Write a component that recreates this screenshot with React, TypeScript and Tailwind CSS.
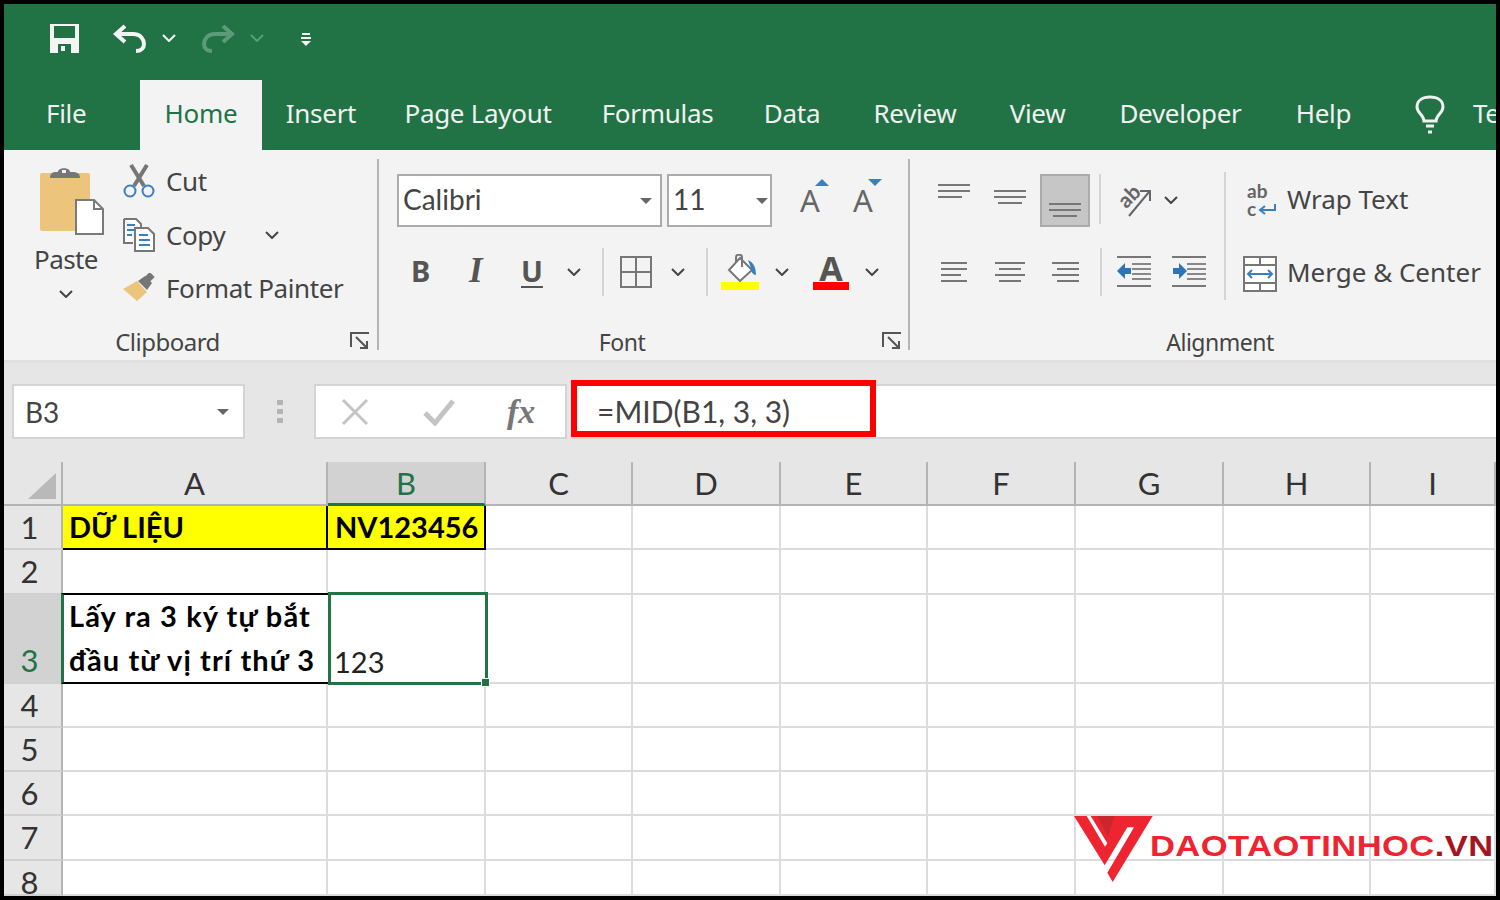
import React from 'react';

const segoe = "font-['Noto_Sans','Open_Sans',sans-serif]";
const calibri = "font-['Lato','Noto_Sans',sans-serif]";

const Chevron = ({ className = 'stroke-[#444]' }: { className?: string }) => (
  <svg viewBox="0 0 14 8" className={`w-[14px] h-[8px] fill-none stroke-2 ${className}`}>
    <polyline points="1,1 7,7 13,1" />
  </svg>
);

const Caret = () => (
  <svg viewBox="0 0 12 6" className="w-[12px] h-[6px] fill-[#666]">
    <polygon points="0,0 12,0 6,6" />
  </svg>
);

const Launcher = ({ className }: { className: string }) => (
  <svg viewBox="0 0 20 18" className={`absolute w-[20px] h-[18px] fill-none stroke-[#555] stroke-2 ${className}`}>
    <polyline points="19,1 1,1 1,15" />
    <path d="M6 5 L17 16 M17 9 V16 H10" />
  </svg>
);

const Lines = ({ widths, align = 'left', size = 32, gap = 6, color = '#777' }: { widths: number[]; align?: 'left' | 'center' | 'right'; size?: number; gap?: number; color?: string }) => (
  <svg width={size} height={(widths.length - 1) * gap + 2} className="block">
    {widths.map((w, i) => {
      const x = align === 'left' ? 0 : align === 'center' ? (size - w) / 2 : size - w;
      return <rect key={i} x={x} y={i * gap} width={w} height={2} fill={color} />;
    })}
  </svg>
);

const IndentIcon = ({ flip }: { flip?: boolean }) => (
  <svg viewBox="0 0 34 32" className="w-[34px] h-[32px]">
    <rect x="0" y="0" width="34" height="2" fill="#777" />
    <rect x="0" y="29" width="34" height="2" fill="#777" />
    {[7, 12, 17, 22].map((y) => (
      <rect key={y} x="15" y={y} width="19" height="2" fill="#888" />
    ))}
    {flip ? (
      <path d="M1 12 H7 V7 L15 15 L7 23 V18 H1 Z" fill="#2f75b5" />
    ) : (
      <path d="M14 12 H8 V7 L0 15 L8 23 V18 H14 Z" fill="#2f75b5" />
    )}
  </svg>
);

const QuickAccess = () => (
  <div className="h-[76px] flex items-center pb-[9px] bg-[#217346]">
    <svg viewBox="0 0 30 30" className="ml-[46px] w-[30px] h-[30px] fill-[#f4f4f4]">
      <path fillRule="evenodd" d="M0 1 H29 V30 H0 Z M4 3 V15 H25 V3 Z M8 21 V30 H21 V21 Z M11 23 H15 V28 H11 Z" />
    </svg>
    <svg viewBox="0 0 34 30" className="ml-[33px] w-[34px] h-[30px] fill-none stroke-[#f4f4f4] stroke-[4]">
      <path d="M12 3 L3 11 L12 19 M3 11 H20 C28 11 31 17 31 21 C31 25 28 28 23 28" />
    </svg>
    <span className="ml-[15px]"><Chevron className="stroke-[#f4f4f4]" /></span>
    <svg viewBox="0 0 34 30" className="ml-[25px] w-[34px] h-[30px] fill-none stroke-[#5c9a78] stroke-[4]">
      <path d="M22 3 L31 11 L22 19 M31 11 H14 C6 11 3 17 3 21 C3 25 6 28 11 28" />
    </svg>
    <span className="ml-[15px]"><Chevron className="stroke-[#5c9a78]" /></span>
    <svg viewBox="0 0 10 13" className="ml-[37px] mt-[3px] w-[10px] h-[13px] fill-[#f4f4f4]">
      <rect x="1" y="0" width="8" height="2" />
      <rect x="0" y="4" width="10" height="2" />
      <polygon points="0,8 10,8 5,13" />
    </svg>
  </div>
);

const tabs = [
  { label: 'Insert', width: 'w-[118px]' },
  { label: 'Page Layout', width: 'w-[196px]' },
  { label: 'Formulas', width: 'w-[163px]' },
  { label: 'Data', width: 'w-[106px]' },
  { label: 'Review', width: 'w-[140px]' },
  { label: 'View', width: 'w-[105px]' },
  { label: 'Developer', width: 'w-[181px]' },
  { label: 'Help', width: 'w-[105px]' },
];

const TabBar = () => (
  <div className={`h-[70px] flex items-stretch bg-[#217346] overflow-hidden text-[26px] tracking-[-0.3px] text-[#f1f1f1] ${segoe}`}>
    <div className="ml-[42px] w-[94px] shrink-0 pt-[11px] leading-[44px]">File</div>
    <div className="w-[122px] shrink-0 pt-[11px] leading-[44px] text-center bg-[#f3f3f3] text-[#217346]">Home</div>
    {tabs.map((t) => (
      <div key={t.label} className={`${t.width} shrink-0 text-center pt-[11px] leading-[44px] whitespace-nowrap`}>{t.label}</div>
    ))}
    <svg viewBox="0 0 30 40" className="ml-[39px] mt-[15px] w-[30px] h-[40px] fill-none stroke-[#f1f1f1] stroke-[3] shrink-0">
      <path d="M9 26 C9 20 2 18 2 12 C2 5 8 2 15 2 C22 2 28 5 28 12 C28 18 21 20 21 26 Z M11 31 H19 M13 37 H17" />
    </svg>
    <div className="ml-[28px] pt-[11px] leading-[44px] shrink-0">Te</div>
  </div>
);

const Divider = () => <div className="w-[2px] h-[191px] mt-[9px] bg-[#b4b4b4] shrink-0" />;
const MiniDivider = ({ className = '' }: { className?: string }) => <div className={`w-[2px] bg-[#d4d4d4] ${className}`} />;

const ClipboardGroup = () => (
  <div className="relative w-[373px] flex flex-col h-[210px]">
    <div className="flex-1 flex">
      <div className="ml-[20px] w-[84px] flex flex-col items-center pt-[15px]">
        <svg viewBox="0 0 64 70" className="ml-[12px] w-[64px] h-[70px]">
          <rect x="0" y="8" width="50" height="58" rx="2" fill="#edc47c" />
          <path d="M10 13 C10 7 14 7 18 7 C18 2 30 2 30 7 C35 7 40 7 40 13 Z" fill="#767676" />
          <rect x="22" y="5" width="4" height="3" fill="#f3f3f3" />
          <path d="M36 35 H54 L63 44 V69 H36 Z" fill="#fff" stroke="#7a7a7a" strokeWidth="2" />
          <path d="M54 35 V44 H63" fill="none" stroke="#7a7a7a" strokeWidth="2" />
        </svg>
        <div className={`mt-[6px] text-[26px] leading-[36px] tracking-[-0.6px] text-[#444] ${segoe}`}>Paste</div>
        <div className="mt-[13px]"><Chevron /></div>
      </div>
      <div className={`ml-[15px] pt-[4px] text-[26px] tracking-[-0.4px] text-[#444] ${segoe}`}>
        <div className="h-[54px] flex items-center">
          <svg viewBox="0 0 32 34" className="w-[32px] h-[34px] fill-none">
            <path d="M8 1 L21 22 M24 1 L11 22" stroke="#767676" strokeWidth="4" />
            <circle cx="7" cy="27" r="5.5" stroke="#3a7fc1" strokeWidth="2" />
            <circle cx="25" cy="27" r="5.5" stroke="#3a7fc1" strokeWidth="2" />
          </svg>
          <span className="ml-[11px]">Cut</span>
        </div>
        <div className="h-[54px] flex items-center">
          <svg viewBox="0 0 32 34" className="w-[32px] h-[34px] fill-none">
            <path d="M1 1 H13 L18 6 V10 M10 25 H1 V1" stroke="#777" strokeWidth="2" fill="#fff" />
            <path d="M4 7 H12 M4 12 H12 M4 17 H9" stroke="#3a7fc1" strokeWidth="2" />
            <path d="M12 10 H25 L31 16 V33 H12 Z" stroke="#777" strokeWidth="2" fill="#fff" />
            <path d="M16 17 H25 M16 22 H27 M16 27 H27" stroke="#3a7fc1" strokeWidth="2" />
          </svg>
          <span className="ml-[11px]">Copy</span>
          <span className="ml-[40px]"><Chevron /></span>
        </div>
        <div className="h-[52px] flex items-center whitespace-nowrap">
          <svg viewBox="0 0 32 30" className="w-[32px] h-[30px]">
            <polygon points="0,16 14,8 24,19 14,28" fill="#edc47c" />
            <polygon points="15,8 22,3 29,10 24,17" fill="#767676" />
            <rect x="23" y="0" width="7" height="7" fill="#767676" transform="rotate(45 26 4)" />
          </svg>
          <span className="ml-[11px]">Format Painter</span>
        </div>
      </div>
    </div>
    <div className={`h-[36px] pr-[46px] text-center text-[24px] leading-[36px] tracking-[-0.5px] text-[#444] ${segoe}`}>Clipboard</div>
    <Launcher className="right-[7px] bottom-[10px]" />
  </div>
);

const FontGroup = () => (
  <div className="relative w-[529px] flex flex-col h-[210px] text-[#555]">
    <div className="flex-1">
      <div className="flex items-center pt-[24px] pl-[18px]">
        <div className={`w-[265px] h-[53px] bg-white border-2 border-[#ababab] flex items-center justify-between pl-[4px] pr-[8px] text-[28px] text-[#444] ${calibri}`}>
          <span className="pb-[3px]">Calibri</span><Caret />
        </div>
        <div className={`ml-[5px] w-[105px] h-[53px] bg-white border-2 border-[#ababab] flex items-center justify-between pl-[4px] pr-[2px] text-[28px] text-[#444] ${calibri}`}>
          <span className="pb-[3px]">11</span><Caret />
        </div>
        <div className={`relative ml-[28px] w-[26px] text-[31px] leading-none text-[#666] ${segoe}`}>
          A
          <svg viewBox="0 0 14 7" className="absolute -top-[6px] -right-[3px] w-[14px] h-[7px] fill-[#3a7fc1]"><polygon points="0,7 14,7 7,0" /></svg>
        </div>
        <div className={`relative ml-[27px] w-[26px] text-[31px] leading-none text-[#666] ${segoe}`}>
          A
          <svg viewBox="0 0 14 7" className="absolute -top-[6px] -right-[3px] w-[14px] h-[7px] fill-[#3a7fc1]"><polygon points="0,0 14,0 7,7" /></svg>
        </div>
      </div>
      <div className="flex items-center mt-[23px] h-[44px] pl-[32px]">
        <span className={`w-[58px] text-[29px] font-bold leading-none pb-[3px] ${segoe}`}>B</span>
        <span className="w-[52px] text-[35px] font-bold italic leading-none pb-[3px] font-['Liberation_Serif',serif]">I</span>
        <span className={`w-[46px] text-[29px] font-bold leading-none pb-[3px] underline underline-offset-4 ${segoe}`}>U</span>
        <Chevron />
        <MiniDivider className="ml-[21px] h-[48px]" />
        <svg viewBox="0 0 32 32" className="ml-[16px] w-[32px] h-[32px] fill-none stroke-[#777] stroke-2">
          <path d="M1 1 H31 V31 H1 Z M16 1 V31 M1 16 H31" />
        </svg>
        <span className="ml-[19px]"><Chevron /></span>
        <MiniDivider className="ml-[21px] h-[48px]" />
        <div className="ml-[13px] w-[38px] flex flex-col items-center">
          <svg viewBox="0 0 32 28" className="w-[32px] h-[28px]">
            <path d="M16 4 L28 16 L16 27 L5 16 Z" fill="#fff" stroke="#777" strokeWidth="2" />
            <path d="M12 9 V3 C12 0 18 0 18 3 V13" fill="none" stroke="#777" strokeWidth="2" />
            <path d="M24 6 C29 8 32 13 32 21 C29 21 27 18 27 14 Z" fill="#3a7fc1" />
          </svg>
          <div className="w-[38px] h-[8px] bg-[#ffff00]" />
        </div>
        <span className="ml-[16px]"><Chevron /></span>
        <div className="ml-[24px] w-[36px] flex flex-col items-center">
          <span className={`text-[34px] font-bold leading-[28px] text-[#555] ${segoe}`}>A</span>
          <div className="w-[36px] h-[8px] bg-[#ff0000]" />
        </div>
        <span className="ml-[16px]"><Chevron /></span>
      </div>
    </div>
    <div className={`h-[36px] pr-[43px] text-center text-[23px] leading-[36px] tracking-[-0.5px] text-[#444] ${segoe}`}>Font</div>
    <Launcher className="right-[6px] bottom-[10px]" />
  </div>
);

const AlignmentGroup = () => (
  <div className="flex-1 flex flex-col h-[210px] overflow-hidden">
    <div className="flex-1 flex">
      <div className="w-[314px] shrink-0">
        <div className="flex h-[53px] mt-[24px] pl-[28px]">
          <div className="w-[56px] pt-[10px]"><Lines widths={[32, 32, 24]} /></div>
          <div className="w-[46px] pt-[16px]"><Lines widths={[32, 32, 24]} align="center" /></div>
          <div className="w-[50px] h-[53px] bg-[#c6c6c6] border-2 border-[#ababab] flex items-end justify-center pb-[8px]"><Lines widths={[32, 32, 24]} align="center" /></div>
          <MiniDivider className="ml-[9px] h-[50px]" />
          <svg viewBox="0 0 34 32" className="ml-[16px] mt-[10px] w-[34px] h-[32px] fill-none stroke-[#666] overflow-visible">
            <text x="13" y="19" fontSize="21" fontWeight="700" textAnchor="middle" transform="rotate(-45 13 13)" fill="#666" stroke="none" fontFamily="Lato, sans-serif">ab</text>
            <path d="M12 32 L32 8 M23 7 H33 V17" strokeWidth="2" />
          </svg>
          <span className="ml-[13px] mt-[22px]"><Chevron /></span>
        </div>
        <div className="flex items-center h-[44px] mt-[23px] pl-[31px]">
          <div className="w-[54px]"><Lines widths={[26, 26, 20, 26]} size={26} /></div>
          <div className="w-[57px]"><Lines widths={[30, 22, 30, 22]} size={30} align="center" /></div>
          <div className="w-[48px]"><Lines widths={[27, 22, 27, 22]} size={27} align="right" /></div>
          <MiniDivider className="h-[48px]" />
          <span className="ml-[15px]"><IndentIcon /></span>
          <span className="ml-[21px]"><IndentIcon flip /></span>
        </div>
      </div>
      <MiniDivider className="h-[128px] mt-[22px] shrink-0" />
      <div className={`pl-[17px] pt-[29px] text-[26px] text-[#444] whitespace-nowrap ${segoe}`}>
        <div className="flex items-center h-[44px] pl-[4px]">
          <svg viewBox="0 0 30 34" className="w-[30px] h-[34px] overflow-visible">
            <text x="0" y="14" fontSize="19" fontWeight="700" fill="#666" fontFamily="Lato, sans-serif">ab</text>
            <text x="0" y="32" fontSize="19" fontWeight="700" fill="#666" fontFamily="Lato, sans-serif">c</text>
            <path d="M28 20 V26 H14 M18 22 L13 26 L18 30" fill="none" stroke="#3a7fc1" strokeWidth="2" />
          </svg>
          <span className="ml-[10px] pb-[3px]">Wrap Text</span>
        </div>
        <div className="flex items-center h-[44px] mt-[29px]">
          <svg viewBox="0 0 34 36" className="w-[34px] h-[36px] fill-none">
            <rect x="1" y="1" width="32" height="34" fill="#fff" stroke="#777" strokeWidth="2" />
            <path d="M1 9 H33 M1 27 H33 M17 1 V9 M17 27 V35" stroke="#777" strokeWidth="2" />
            <path d="M5 18 H29 M9 14 L5 18 L9 22 M25 14 L29 18 L25 22" stroke="#3a7fc1" strokeWidth="2" />
          </svg>
          <span className="ml-[10px] pb-[3px]">Merge &amp; Center</span>
        </div>
      </div>
    </div>
    <div className={`h-[36px] pl-[34px] text-center text-[23px] leading-[36px] tracking-[-0.5px] text-[#444] ${segoe}`}>Alignment</div>
  </div>
);

const Ribbon = () => (
  <div className="h-[210px] flex bg-[#f3f3f3]">
    <ClipboardGroup />
    <Divider />
    <FontGroup />
    <Divider />
    <AlignmentGroup />
  </div>
);

const FormulaBar = () => (
  <div className="h-[102px] bg-[#e6e6e6] border-t-[3px] border-[#e1e1e1] flex items-start pt-[21px]">
    <div className={`ml-[8px] w-[233px] h-[55px] bg-white border-2 border-[#d4d4d4] flex items-center justify-between pl-[11px] pr-[14px] text-[28px] text-[#444] ${calibri}`}>
      <span>B3</span><Caret />
    </div>
    <div className="ml-[32px] mt-[16px] flex flex-col gap-[4px]">
      <div className="w-[6px] h-[5px] bg-[#b4b4b4]" />
      <div className="w-[6px] h-[5px] bg-[#b4b4b4]" />
      <div className="w-[6px] h-[5px] bg-[#b4b4b4]" />
    </div>
    <div className="ml-[31px] w-[253px] h-[55px] bg-white border-2 border-[#d4d4d4] flex items-center">
      <svg viewBox="0 0 28 28" className="ml-[25px] w-[28px] h-[28px] fill-none stroke-[#c4c4c4] stroke-[3]"><path d="M2 2 L26 26 M26 2 L2 26" /></svg>
      <svg viewBox="0 0 32 28" className="ml-[54px] w-[32px] h-[28px] fill-none stroke-[#c4c4c4] stroke-[5]"><path d="M2 15 L12 25 L30 3" /></svg>
      <span className="ml-[52px] text-[34px] leading-none italic font-bold text-[#777] font-['Liberation_Serif',serif]">fx</span>
    </div>
    <div className="relative ml-[4px] flex-1 h-[55px] bg-white border-y-2 border-[#d4d4d4] flex items-center pl-[26px] text-[30px] text-[#444]">
      <span className={calibri}>=MID(B1, 3, 3)</span>
      <div className="absolute left-0 -top-[6px] w-[305px] h-[57px] border-[6px] border-[#ff0000]" />
    </div>
  </div>
);

const columns = ['A', 'B', 'C', 'D', 'E', 'F', 'G', 'H', 'I'];
const rows = ['1', '2', '3', '4', '5', '6', '7', '8'];

const Cell = ({ row, col }: { row: string; col: string }) => {
  const key = col + row;
  if (key === 'A1') {
    return <div className="bg-[#ffff00] border-b-2 border-r-2 border-black pl-[6px] leading-[41px] font-bold text-[29px] text-black">DỮ LIỆU</div>;
  }
  if (key === 'B1') {
    return <div className="bg-[#ffff00] border-b-2 border-r-2 border-black pl-[7px] leading-[41px] font-bold text-[29px] text-black whitespace-nowrap">NV123456</div>;
  }
  if (key === 'A3') {
    return (
      <div className="-mt-[2px] -ml-[2px] border-y-2 border-black border-l-[3px] border-l-[#217346] pl-[5px] leading-[44px] font-bold text-[29px] tracking-[1.1px] text-black whitespace-nowrap">
        <div className="-mt-[1px]">Lấy ra 3 ký tự bắt</div>
        <div>đầu từ vị trí thứ 3</div>
      </div>
    );
  }
  if (key === 'B3') {
    return (
      <div className="relative -mt-[3px] -mr-[2px] -mb-[1px] border-[3px] border-[#217346] flex items-end pl-[3px] leading-[41px] text-[29px] text-[#222]">
        123
        <div className="absolute -right-[5px] -bottom-[5px] w-[9px] h-[9px] bg-[#217346] border border-white" />
      </div>
    );
  }
  return <div className="border-r-2 border-b-2 border-[#dcdcdc] bg-white" />;
};

const Sheet = () => (
  <div className={`flex-1 grid grid-cols-[59px_265px_158px_147px_148px_147px_148px_148px_147px_125px] grid-rows-[44px_44px_45px_89px_44px_44px_44px_45px_35px] bg-white overflow-hidden ${calibri}`}>
    <div className="bg-[#e6e6e6] border-r-2 border-b-2 border-[#b4b4b4] flex items-end justify-end pr-[5px] pb-[5px]">
      <svg viewBox="0 0 28 26" className="w-[28px] h-[26px] fill-[#b9b9b9]"><polygon points="28,0 28,26 0,26" /></svg>
    </div>
    {columns.map((c) => (
      <div
        key={c}
        className={c === 'B'
          ? 'bg-[#d2d2d2] border-r-2 border-[#b4b4b4] border-b-[3px] border-b-[#217346] text-center text-[31px] leading-[42px] text-[#217346]'
          : 'bg-[#e6e6e6] border-r-2 border-b-2 border-[#b4b4b4] text-center text-[31px] leading-[42px] text-[#333]'}
      >
        {c}
      </div>
    ))}
    {rows.map((r) => (
      <React.Fragment key={r}>
        <div
          className={r === '3'
            ? 'bg-[#d2d2d2] border-b-2 border-[#d0d0d0] pr-[8px] flex items-end justify-center text-[31px] leading-[44px] text-[#217346]'
            : 'bg-[#e6e6e6] border-r-2 border-r-[#b4b4b4] border-b-2 border-b-[#d0d0d0] pr-[6px] flex items-start justify-center text-[31px] leading-[42px] text-[#333]'}
        >
          {r}
        </div>
        {columns.map((c) => (
          <Cell key={c} row={r} col={c} />
        ))}
      </React.Fragment>
    ))}
  </div>
);

const Watermark = () => (
  <div className="absolute left-[1070px] top-[810px] flex items-start">
    <svg viewBox="0 0 300 234" className="w-[100px] h-[78px] shrink-0">
      <polygon points="12,18 248,18 128,216 112,188 192,52 172,52 104,166" fill="#ee2430" />
      <polygon points="82,18 134,18 114,78" fill="#c92630" />
      <polygon points="50,18 62,18 112,100 105,110" fill="#fff" />
    </svg>
    <div className="mt-[19px] -ml-[20px] whitespace-nowrap origin-left scale-x-[1.15] text-[30px] leading-[34px] font-bold tracking-[0.4px] text-[#ee2430] font-['Liberation_Sans',sans-serif]">
      DAOTAOTINHOC<span className="text-[#a51420]">.VN</span>
    </div>
  </div>
);

export default function App() {
  return (
    <div className="relative w-[1500px] h-[900px] bg-black p-[4px] overflow-hidden">
      <div className="w-[1492px] h-[892px] flex flex-col overflow-hidden">
        <QuickAccess />
        <TabBar />
        <Ribbon />
        <FormulaBar />
        <Sheet />
      </div>
      <Watermark />
    </div>
  );
}
